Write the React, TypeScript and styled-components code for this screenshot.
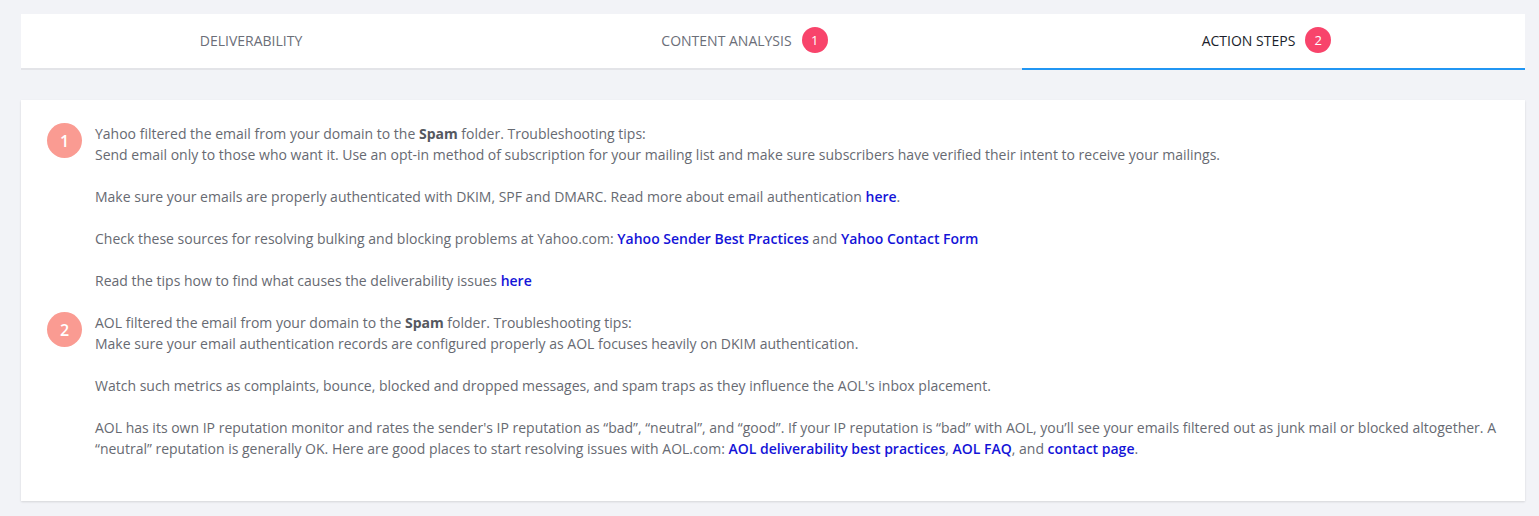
import styled, { createGlobalStyle } from 'styled-components'

const GlobalStyle = createGlobalStyle`
    body {
        margin: 0;
        background: #f2f3f7;
        font-family: 'Open Sans', 'Noto Sans', sans-serif;
    }
`

const tabs = [
    { label: 'Deliverability', badge: null, active: false },
    { label: 'Content Analysis', badge: 1, active: false },
    { label: 'Action Steps', badge: 2, active: true },
]

export default function App() {
    return (
        <>
            <GlobalStyle />
            <Page>
                <TabBar>
                    {tabs.map((t) => (
                        <Tab key={t.label} $active={t.active}>
                            {t.label}
                            {t.badge !== null && <Badge>{t.badge}</Badge>}
                        </Tab>
                    ))}
                </TabBar>

                <Card>
                    <Step>
                        <StepNumber>1</StepNumber>
                        <StepText>
                            <p>
                                Yahoo filtered the email from your domain to the <b>Spam</b> folder. Troubleshooting tips:
                                <br />
                                Send email only to those who want it. Use an opt-in method of subscription for your mailing list and make sure subscribers have verified their intent to receive your mailings.
                            </p>
                            <p>
                                Make sure your emails are properly authenticated with DKIM, SPF and DMARC. Read more about email authentication <Link href='#'>here</Link>.
                            </p>
                            <p>
                                Check these sources for resolving bulking and blocking problems at Yahoo.com: <Link href='#'>Yahoo Sender Best Practices</Link> and <Link href='#'>Yahoo Contact Form</Link>
                            </p>
                            <p>
                                Read the tips how to find what causes the deliverability issues <Link href='#'>here</Link>
                            </p>
                        </StepText>
                    </Step>

                    <Step>
                        <StepNumber>2</StepNumber>
                        <StepText>
                            <p>
                                AOL filtered the email from your domain to the <b>Spam</b> folder. Troubleshooting tips:
                                <br />
                                Make sure your email authentication records are configured properly as AOL focuses heavily on DKIM authentication.
                            </p>
                            <p>
                                Watch such metrics as complaints, bounce, blocked and dropped messages, and spam traps as they influence the AOL's inbox placement.
                            </p>
                            <p>
                                AOL has its own IP reputation monitor and rates the sender's IP reputation as “bad”, “neutral”, and “good”. If your IP reputation is “bad” with AOL, you’ll see your emails filtered out as junk mail or blocked altogether. A “neutral” reputation is generally OK. Here are good places to start resolving issues with AOL.com: <Link href='#'>AOL deliverability best practices</Link>, <Link href='#'>AOL FAQ</Link>, and <Link href='#'>contact page</Link>.
                            </p>
                        </StepText>
                    </Step>
                </Card>
            </Page>
        </>
    )
}

const Page = styled.div`
    padding: 14px 14px 16px 21px;
    display: flex;
    flex-direction: column;
    gap: 30px;
`

const TabBar = styled.nav`
    display: grid;
    grid-template-columns: 460px 541px 1fr;
    background: #fff;
    border-bottom: 2px solid #e3e4e8;
`

const Tab = styled.div<{ $active: boolean }>`
    height: 56px;
    box-sizing: border-box;
    padding-bottom: 2px;
    display: flex;
    align-items: center;
    justify-content: center;
    margin-bottom: -2px;
    font-size: 14px;
    text-transform: uppercase;
    color: ${(p) => (p.$active ? '#1b1e2b' : '#6b6e78')};
    border-bottom: 2px solid ${(p) => (p.$active ? '#2196f3' : 'transparent')};
`

const Badge = styled.span`
    width: 26px;
    height: 26px;
    margin: 0 14px 0 10px;
    border-radius: 50%;
    background: #f8446b;
    color: #fff;
    font-size: 13px;
    display: inline-flex;
    align-items: center;
    justify-content: center;
`

const Card = styled.section`
    background: #fff;
    box-shadow: 0 1px 2px rgba(0, 0, 0, 0.12);
    padding: 23px 26px 21px;
    display: flex;
    flex-direction: column;
`

const Step = styled.div`
    display: flex;
    gap: 13px;
    align-items: flex-start;
`

const StepNumber = styled.div`
    flex: none;
    width: 35px;
    height: 35px;
    border-radius: 50%;
    background: #fa9b92;
    color: #fff;
    font-size: 16px;
    font-weight: 600;
    display: flex;
    align-items: center;
    justify-content: center;
`

const StepText = styled.div`
    font-size: 14px;
    line-height: 21px;
    color: #676a72;

    p {
        margin: 0 0 21px;
    }

    b {
        font-weight: 700;
        color: #55585f;
    }
`

const Link = styled.a`
    color: #1414d8;
    font-weight: 600;
    text-decoration: none;
`
